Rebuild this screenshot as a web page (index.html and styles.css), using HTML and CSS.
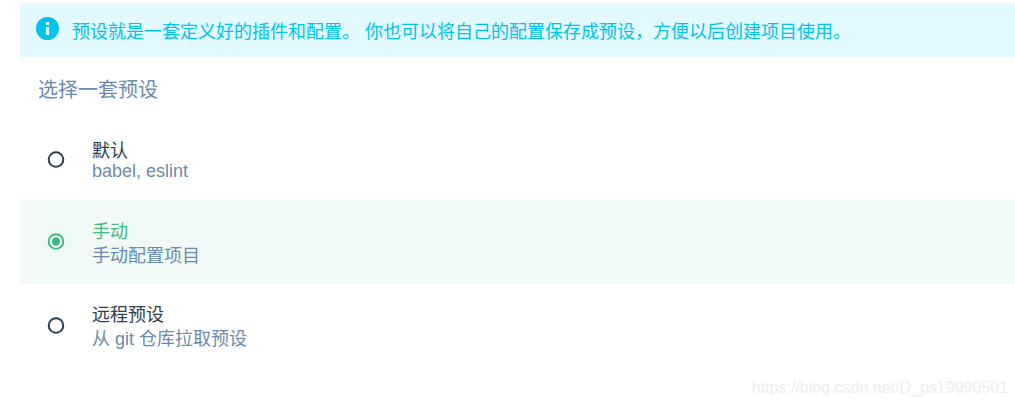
FILE: index.html
```html
<!DOCTYPE html>
<html lang="zh">
<head>
<meta charset="utf-8">
<title>预设</title>
<link rel="stylesheet" href="styles.css">
</head>
<body>
<main class="page">
  <div class="alert">
    <svg class="alert-icon" viewBox="0 0 24 24" aria-hidden="true">
      <circle cx="12" cy="12" r="12" fill="#03c2ec"/>
      <rect x="10.3" y="5.2" width="3.4" height="3.2" fill="#e1f9ff"/>
      <rect x="10.3" y="10.4" width="3.4" height="8.4" fill="#e1f9ff"/>
    </svg>
    <span>预设就是一套定义好的插件和配置。 你也可以将自己的配置保存成预设，方便以后创建项目使用。</span>
  </div>
  <h2 class="heading">选择一套预设</h2>
  <ul class="options">
    <li class="option">
      <svg class="radio" viewBox="0 0 18 17" aria-hidden="true"><circle cx="9" cy="8.5" r="7.3"/></svg>
      <div class="text">
        <div class="name">默认</div>
        <div class="desc latin">babel, eslint</div>
      </div>
    </li>
    <li class="option selected">
      <svg class="radio" viewBox="0 0 18 17" aria-hidden="true"><circle cx="9" cy="8.5" r="7.3"/><circle class="dot" cx="9" cy="8.5" r="4.2"/></svg>
      <div class="text">
        <div class="name">手动</div>
        <div class="desc">手动配置项目</div>
      </div>
    </li>
    <li class="option">
      <svg class="radio" viewBox="0 0 18 17" aria-hidden="true"><circle cx="9" cy="8.5" r="7.3"/></svg>
      <div class="text">
        <div class="name">远程预设</div>
        <div class="desc">从 git 仓库拉取预设</div>
      </div>
    </li>
  </ul>
</main>
<div class="watermark">https://blog.csdn.net/D_ps19990501</div>
</body>
</html>
```
FILE: styles.css
```css
* { box-sizing: border-box; }
html, body { margin: 0; padding: 0; height: 100%; background: #fff; overflow: hidden; }
body {
  position: relative;
  font-family: "Liberation Sans", "Noto Sans CJK SC", sans-serif;
  font-size: 18px;
  color: #2c3e50;
}
.page { padding: 3px 0 0 20px; }
.alert {
  display: flex;
  align-items: center;
  gap: 13px;
  height: 54px;
  padding-left: 16px;
  background: #e1f9ff;
  color: #03c2ec;
  border-radius: 3px 0 0 3px;
}
.alert-icon { width: 23px; height: 23px; flex: none; margin-top: -3px; }
.heading {
  margin: 0;
  padding: 20px 0 0 18px;
  height: 61px;
  font-size: 20px;
  font-weight: 400;
  line-height: 26px;
  color: #6a8bad;
}
.options { list-style: none; margin: 0; padding: 0; }
.option { display: flex; align-items: center; height: 82px; padding-left: 27px; }
.radio {
  width: 18px;
  height: 17px;
  flex: none;
  margin-right: 27px;
  fill: none;
  stroke: #2c3e50;
  stroke-width: 2;
}
.text { padding-top: 4px; }
.name { line-height: 24px; }
.desc { line-height: 24px; color: #6a8bad; }
.desc.latin { line-height: 21px; margin: -2px 0 2px; }
.selected { height: 84px; background: #f0f9f5; }
.selected .name { color: #42b983; }
.selected .radio { stroke: #42b983; margin-bottom: 2px; }
.selected .dot { fill: #42b983; stroke: none; }
.watermark {
  position: absolute;
  right: 7px;
  top: 378px;
  font-size: 16px;
  line-height: 20px;
  color: #eeeeee;
}
```
